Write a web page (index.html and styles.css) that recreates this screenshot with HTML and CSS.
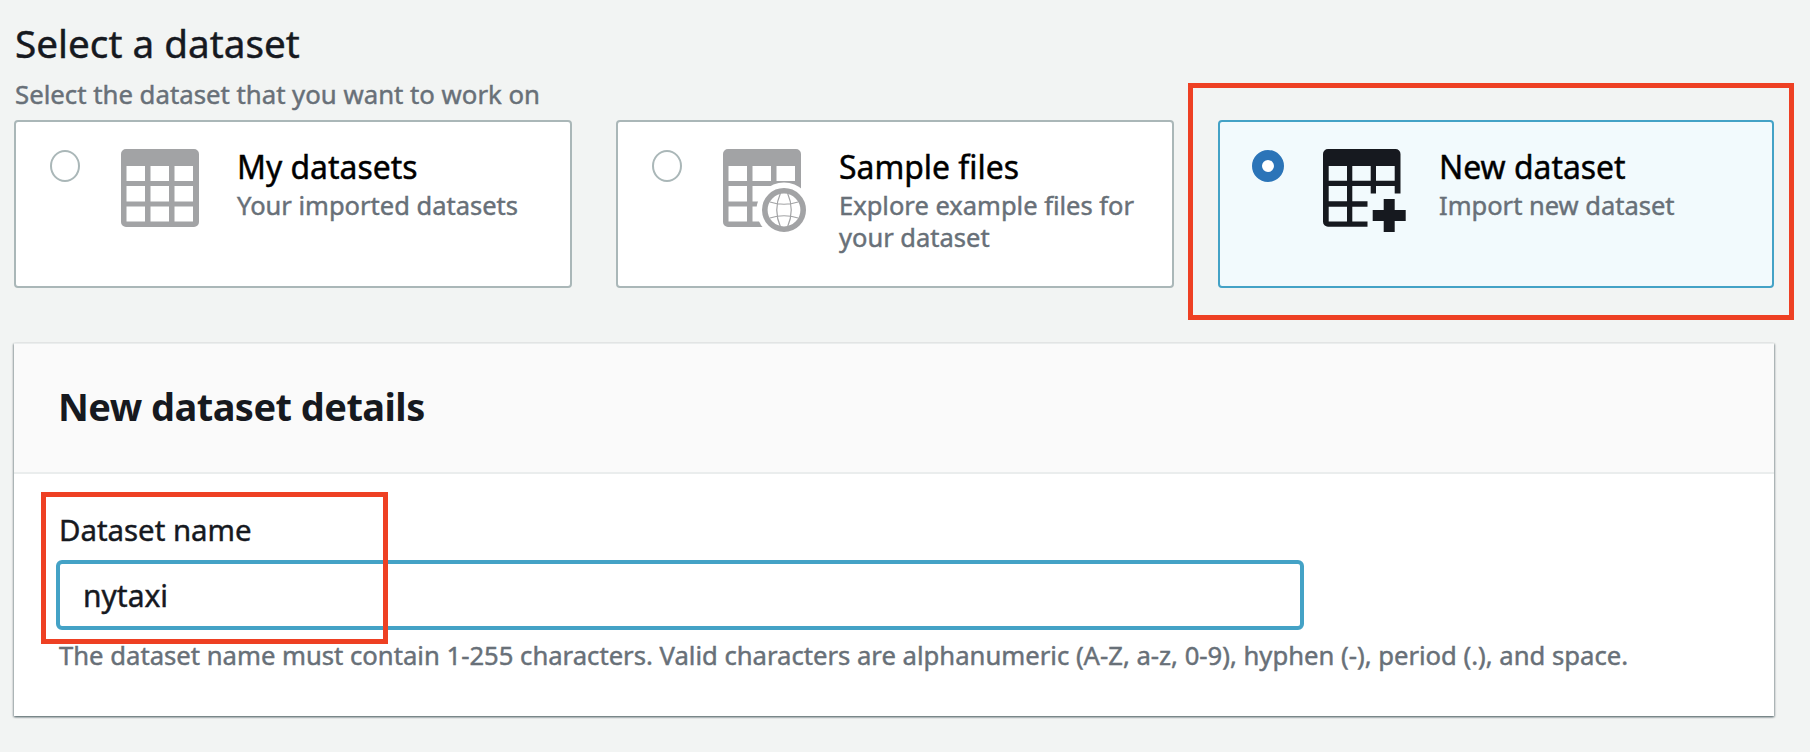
FILE: index.html
```html
<!DOCTYPE html>
<html lang="en">
<head>
<meta charset="utf-8">
<title>Select a dataset</title>
<link rel="stylesheet" href="styles.css">
</head>
<body>
<main class="page">
  <h1 class="page-title">Select a dataset</h1>
  <p class="page-subtitle">Select the dataset that you want to work on</p>

  <div class="tiles">
    <label class="tile">
      <span class="radio"></span>
      <svg class="tile-icon" viewBox="0 0 84 84" fill="#a2a3a5">
        <path fill-rule="evenodd" d="M5 0H73a5 5 0 0 1 5 5V73a5 5 0 0 1-5 5H5a5 5 0 0 1-5-5V5a5 5 0 0 1 5-5ZM5.500 17V32H24V17ZM29.500 17V32H48V17ZM53.500 17V32H72V17ZM5.500 37V52.500H24V37ZM29.500 37V52.500H48V37ZM53.500 37V52.500H72V37ZM5.500 57.500V72.500H24V57.500ZM29.500 57.500V72.500H48V57.500ZM53.500 57.500V72.500H72V57.500Z"/>
      </svg>
      <span class="tile-text">
        <span class="tile-title">My datasets</span>
        <span class="tile-desc">Your imported datasets</span>
      </span>
    </label>

    <label class="tile">
      <span class="radio"></span>
      <svg class="tile-icon" viewBox="0 0 84 84" fill="#a2a3a5">
        <path fill-rule="evenodd" d="M5 0H73a5 5 0 0 1 5 5V73a5 5 0 0 1-5 5H5a5 5 0 0 1-5-5V5a5 5 0 0 1 5-5ZM5.500 17V32H24V17ZM29.500 17V32H48V17ZM53.500 17V32H72V17ZM5.500 37V52.500H24V37ZM29.500 37V52.500H60V37ZM5.500 57.500V72.500H24V57.500ZM29.500 57.500V72.500H60V57.500Z"/>
        <circle cx="61" cy="61" r="27.5" fill="#fff"/>
        <circle cx="61" cy="61" r="19.2" fill="#fff" stroke="#a2a3a5" stroke-width="5.6"/>
        <path fill="none" stroke="#a2a3a5" stroke-width="1.2" d="M57.500 44Q50 61 57.500 78M64.500 44Q72 61 64.500 78M47 53Q61 57.500 75 53M47 69Q61 64.500 75 69"/>
      </svg>
      <span class="tile-text">
        <span class="tile-title">Sample files</span>
        <span class="tile-desc">Explore example files for<br>your dataset</span>
      </span>
    </label>

    <label class="tile tile-selected">
      <span class="radio radio-checked"></span>
      <svg class="tile-icon" viewBox="0 0 84 84" fill="#16191f">
        <path d="M5 0H72.500a5 5 0 0 1 5 5V44.500H71.700V37H53V44.500H47.700V37H29.300V52.300H44.500V57.700H29.300V72.500H44.500V77.700H5a5 5 0 0 1-5-5V5a5 5 0 0 1 5-5Z"/>
        <path fill="#f2fafd" d="M5.700 17H24V31.700H5.700ZM29.300 17H47.700V31.700H29.300ZM53 17H71.700V31.700H53ZM5.700 37H24V52.300H5.700ZM5.700 57.700H24V72.500H5.700Z"/>
        <path d="M60.700 50H71.700V61H82.700V72H71.700V83H60.700V72H49.700V61H60.700Z"/>
      </svg>
      <span class="tile-text">
        <span class="tile-title">New dataset</span>
        <span class="tile-desc">Import new dataset</span>
      </span>
      <span class="highlight highlight-tile"></span>
    </label>
  </div>

  <section class="panel">
    <header class="panel-header">
      <h2 class="panel-title">New dataset details</h2>
    </header>
    <div class="panel-body">
      <label class="field-label" for="dataset-name">Dataset name</label>
      <input class="field-input" id="dataset-name" type="text" value="nytaxi" spellcheck="false">
      <p class="field-hint">The dataset name must contain 1-255 characters. Valid characters are alphanumeric (A-Z, a-z, 0-9), hyphen (-), period (.), and space.</p>
      <span class="highlight highlight-field"></span>
    </div>
  </section>
</main>
</body>
</html>
```
FILE: styles.css
```css
* { box-sizing: border-box; }

body {
  margin: 0;
  background: #f2f4f3;
  color: #16191f;
  font-family: "Noto Sans", "Open Sans", sans-serif;
  -webkit-text-stroke: 0.45px currentColor;
}

h1, h2, p { margin: 0; white-space: nowrap; }

.page {
  width: 1760px;
  min-height: 752px;
  margin-left: 14px;
  padding-top: 18px;
}

.page-title {
  margin-left: 1px;
  font-size: 38.7px;
  line-height: 50px;
  font-weight: 400;
}

.page-subtitle {
  margin: 10px 0 0 1px;
  font-size: 25.75px;
  line-height: 32px;
  color: #687078;
}

.tiles {
  display: grid;
  grid-template-columns: 558px 558px 556px;
  gap: 44px;
  margin-top: 10px;
}

.tile {
  position: relative;
  display: flex;
  height: 168px;
  padding-left: 34px;
  border: 2px solid #aab7b8;
  border-radius: 4px;
  background: #fff;
}

.tile-selected {
  padding-left: 32px;
  border-color: #44a2c6;
  background: #f2fafd;
}

.radio {
  flex: none;
  width: 30px;
  height: 32px;
  margin-top: 28px;
  border: 2px solid #aab7b8;
  border-radius: 50%;
  background: #fff;
}

.radio-checked {
  width: 32px;
  border: 10px solid #2b74b8;
}

.tile-icon {
  flex: none;
  width: 84px;
  height: 84px;
  margin: 27px 0 0 41px;
}

.tile-selected .tile-icon { margin-left: 39px; }

.tile-text {
  display: flex;
  flex-direction: column;
  gap: 4px;
  margin: 27px 0 0 32px;
  white-space: nowrap;
}

.tile-title {
  font-size: 31.9px;
  line-height: 36px;
  color: #000;
}

.tile-desc {
  font-size: 25.5px;
  line-height: 32px;
  color: #687078;
}

.panel {
  height: 373px;
  margin-top: 55px;
  background: #fff;
  box-shadow: 0 1px 2px rgba(0, 28, 36, 0.45), 1px 1px 2px rgba(0, 28, 36, 0.22), -1px 1px 2px rgba(0, 28, 36, 0.22);
}

.panel-header {
  height: 131px;
  padding: 36px 46px 0 44px;
  border-top: 1px solid #eaeded;
  border-bottom: 2px solid #eaeded;
  background: #fafafa;
}

.panel-title {
  font-size: 38px;
  line-height: 52px;
  font-weight: 700;
  letter-spacing: -0.55px;
  -webkit-text-stroke: 0;
}

.panel-body {
  position: relative;
  display: flex;
  flex-direction: column;
  align-items: flex-start;
  padding: 36px 0 0 42px;
}

.field-label {
  margin-left: 3px;
  font-size: 29.4px;
  line-height: 40px;
}

.field-input {
  width: 1248px;
  height: 70px;
  margin-top: 10px;
  padding: 0 0 0 23px;
  border: 4px solid #44a2c6;
  border-radius: 6px;
  outline: 0;
  background: #fff;
  color: #16191f;
  font: inherit;
  font-size: 30px;
  -webkit-text-stroke: inherit;
}

.field-hint {
  margin: 10px 0 0 3px;
  font-size: 25.65px;
  line-height: 32px;
  color: #687078;
}

.highlight {
  position: absolute;
  border: 5px solid #ee4023;
  pointer-events: none;
}

.highlight-tile {
  top: -39px;
  left: -32px;
  width: 606px;
  height: 237px;
}

.highlight-field {
  top: 18px;
  left: 27px;
  width: 347px;
  height: 152px;
}
```
